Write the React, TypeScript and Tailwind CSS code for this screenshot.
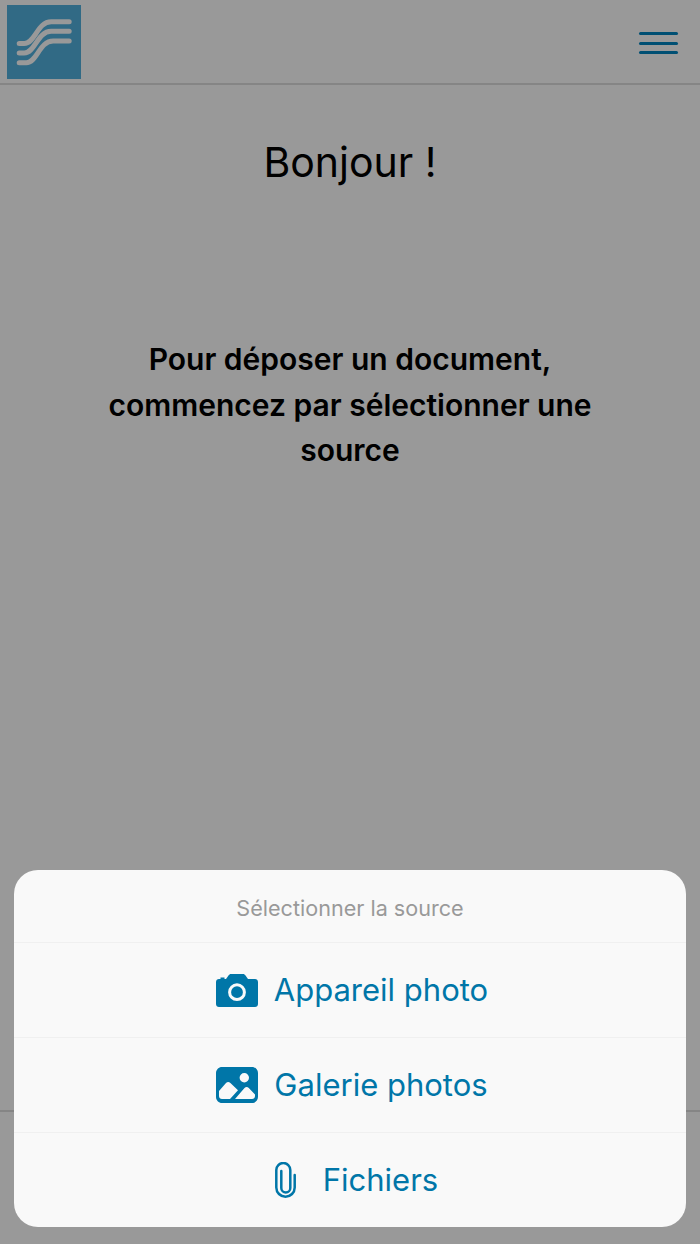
import { useState } from "react";

function Logo() {
  return (
    <div className="w-[74px] h-[74px] bg-[#316a85]">
      <svg width="74" height="74" viewBox="0 0 74 74" fill="none" stroke="#999999" strokeWidth="5" strokeLinecap="round">
        <path d="M12.200 38.500h5c11 0 13-21.800 27-21.800h18" />
        <path d="M12.200 48h5c11 0 13-21.700 27-21.700h18" />
        <path d="M12.200 57.700h7c11 0 13-21.700 27-21.700h16" />
      </svg>
    </div>
  );
}

function CameraIcon() {
  return (
    <svg width="42" height="33" viewBox="0 0 42 33">
      <path
        fillRule="evenodd"
        fill="#0076a8"
        d="M3 5h1.500V3.500h4V5h1.500l2.500-3.500C13.200.5 14 0 15 0h12c1 0 1.800.5 2.500 1.500L32 5h7c1.700 0 3 1.300 3 3v22c0 1.700-1.300 3-3 3H3c-1.700 0-3-1.300-3-3V8c0-1.700 1.300-3 3-3zM21 9.300a8.900 8.900 0 1 0 0 17.800 8.900 8.900 0 0 0 0-17.800zm0 3a5.900 5.900 0 1 1 0 11.800 5.900 5.900 0 0 1 0-11.800z"
      />
    </svg>
  );
}

function GalleryIcon() {
  return (
    <svg width="42" height="36" viewBox="0 0 42 36">
      <path
        fillRule="evenodd"
        fill="#0076a8"
        d="M6 0h30c3.300 0 6 2.700 6 6v24c0 3.300-2.700 6-6 6H6c-3.300 0-6-2.700-6-6V6c0-3.300 2.700-6 6-6zM28.300 6a4.700 4.700 0 1 0 0 9.400 4.700 4.700 0 0 0 0-9.400zM3 24l7-8c1.400-1.500 3-1.500 4.400 0l7.600 7.300L14 32H6c-1.700 0-3-1.300-3-3zM19 32l9.500-11c1.300-1.400 3-1.400 4.300 0l6.200 6.500V29c0 1.700-1.300 3-3 3z"
      />
    </svg>
  );
}

function ClipIcon() {
  return (
    <svg width="21" height="36" viewBox="0 0 21 36" fill="none" stroke="#0076a8" strokeWidth="2.500" strokeLinecap="round">
      <path d="M19.700 13v12.500a9.200 9.200 0 0 1-18.400 0V8a7 7 0 0 1 14 0v18a4.500 4.500 0 0 1-9 0V9" />
    </svg>
  );
}

type Source = { label: string; icon: React.ReactNode; layout: string };

function SourceRow({ label, icon, layout }: Source) {
  var [pressed, setPressed] = useState(false);

  return (
    <button
      onPointerDown={() => setPressed(true)}
      onPointerUp={() => setPressed(false)}
      className={`${pressed ? "bg-[#eeeeee]" : ""} h-[95px] w-full flex items-center justify-center border-t border-[#f0f0f0] ${layout}`}
    >
      {icon}
      <span className="text-[31px] text-[#0076a8]">{label}</span>
    </button>
  );
}

function App() {
  var sources: Source[] = [
    { label: "Appareil photo", icon: <CameraIcon />, layout: "gap-[16px] pl-[4px]" },
    { label: "Galerie photos", icon: <GalleryIcon />, layout: "gap-[16px] pl-[4px]" },
    { label: "Fichiers", icon: <ClipIcon />, layout: "gap-[27px] pl-[13px]" },
  ];

  return (
    <div className="relative h-[1244px] w-[700px] overflow-hidden bg-[#999999] font-['Inter',sans-serif] text-black">
      <header className="h-[85px] flex items-start justify-between pl-[7px] pr-[22px] pt-[5px] border-b-2 border-[#858585]">
        <Logo />
        <div className="w-[39px] mt-[27px] flex flex-col gap-[6.600px]">
          <div className="h-[3px] rounded-full bg-[#004f73]" />
          <div className="h-[3px] rounded-full bg-[#004f73]" />
          <div className="h-[3px] rounded-full bg-[#004f73]" />
        </div>
      </header>

      <main className="flex flex-col items-center">
        <h1 className="mt-[49px] text-[41px] leading-[56px]">Bonjour !</h1>
        <p className="mt-[147px] w-[520px] text-center text-[30px] leading-[45.500px] font-semibold">
          Pour déposer un document, commencez par sélectionner une source
        </p>
      </main>

      <div className="absolute left-0 right-0 top-[1110px] h-[2px] bg-[#858585]" />

      <div className="absolute left-[14px] right-[14px] bottom-[17px] rounded-[24px] bg-[#f9f9f9] overflow-hidden">
        <div className="h-[72px] pt-[4px] flex items-center justify-center text-[21.600px] text-[#999999]">
          Sélectionner la source
        </div>
        {sources.map((source) => (
          <SourceRow key={source.label} {...source} />
        ))}
      </div>
    </div>
  );
}

export default App;
